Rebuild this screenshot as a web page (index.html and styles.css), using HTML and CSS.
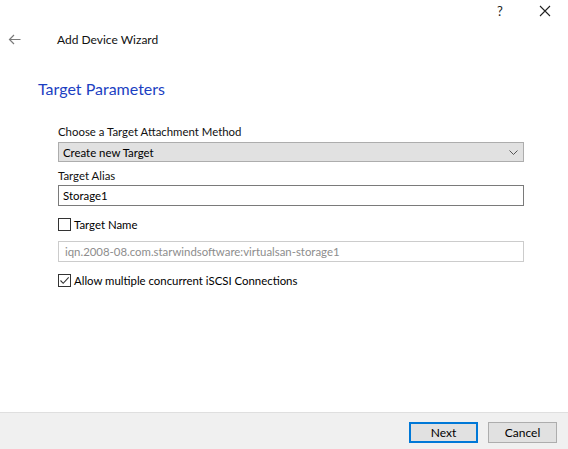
FILE: index.html
```html
<!DOCTYPE html>
<html>
<head>
<meta charset="utf-8">
<link rel="stylesheet" href="styles.css">
</head>
<body>
<div class="window">
  <div class="titlebar">
    <span class="tb-btn help">?</span>
    <span class="tb-btn close">
      <svg width="12" height="12" viewBox="0 0 12 12"><path d="M1 1 L11 11 M11 1 L1 11" stroke="#222" stroke-width="1.1" fill="none"/></svg>
    </span>
  </div>
  <div class="header">
    <span class="back">
      <svg width="13" height="11" viewBox="0 0 13 11"><path d="M12.5 5.5 H1.5 M6 1 L1.5 5.5 L6 10" stroke="#7a7a7a" stroke-width="1.2" fill="none"/></svg>
    </span>
    <span class="wiz-title">Add Device Wizard</span>
  </div>
  <main class="content">
    <h1 class="page-title">Target Parameters</h1>
    <div class="form">
      <label class="field-label">Choose a Target Attachment Method</label>
      <div class="combo">
        <span>Create new Target</span>
        <svg width="9" height="5" viewBox="0 0 9 5"><path d="M0.5 0.5 L4.5 4.5 L8.5 0.5" stroke="#555" stroke-width="1" fill="none"/></svg>
      </div>
      <label class="field-label alias">Target Alias</label>
      <div class="textbox">Storage1</div>
      <div class="check-row name-row">
        <span class="checkbox"></span>
        <span>Target Name</span>
      </div>
      <div class="textbox disabled">iqn.2008-08.com.starwindsoftware:virtualsan-storage1</div>
      <div class="check-row multi-row">
        <span class="checkbox checked">
          <svg width="11" height="11" viewBox="0 0 11 11"><path d="M1.5 5.5 L4.2 8.3 L9.7 2.3" stroke="#333" stroke-width="1.1" fill="none"/></svg>
        </span>
        <span>Allow multiple concurrent iSCSI Connections</span>
      </div>
    </div>
  </main>
  <footer class="footer">
    <button class="btn primary">Next</button>
    <button class="btn">Cancel</button>
  </footer>
</div>
</body>
</html>
```
FILE: styles.css
```css
html, body {
  margin: 0;
  padding: 0;
  background: #ffffff;
}
body {
  font-family: Lato, "Noto Sans", sans-serif;
  font-size: 12px;
  color: #000;
}
.window {
  display: flex;
  flex-direction: column;
  height: 449px;
  width: 568px;
}
.titlebar {
  height: 22px;
  display: flex;
  justify-content: flex-end;
  align-items: center;
}
.tb-btn {
  width: 46px;
  display: flex;
  justify-content: center;
  align-items: center;
  height: 22px;
}
.help {
  font-size: 13px;
  color: #222;
  margin-right: -1px;
}
.header {
  display: flex;
  align-items: center;
  height: 34px;
}
.back {
  width: 13px;
  margin-left: 8px;
  margin-right: 36px;
  display: flex;
}
.wiz-title {
  font-size: 12px;
  color: #111;
}
.content {
  flex: 1;
}
.page-title {
  margin: 22px 0 0 38px;
  font-size: 16px;
  font-weight: normal;
  color: #1c3fc2;
  line-height: 22px;
}
.form {
  margin: 24px 0 0 58px;
  width: 466px;
  font-size: 11.4px;
}
.field-label {
  display: block;
  line-height: 16px;
  height: 16px;
  color: #111;
}
.alias {
  margin-top: 6px;
}
.combo {
  margin-top: 2px;
  height: 18px;
  border: 1px solid #adadad;
  background: #e1e1e1;
  display: flex;
  align-items: center;
  justify-content: space-between;
  padding: 0 5px 0 4px;
}
.textbox {
  margin-top: 1px;
  height: 19px;
  line-height: 19px;
  border: 1px solid #7a7a7a;
  padding: 0 4px;
  background: #fff;
}
.textbox.disabled {
  margin-top: 9px;
  border-color: #cccccc;
  color: #8d8d8d;
  height: 19px;
  line-height: 19px;
  padding: 0 6px;
}
.check-row {
  display: flex;
  align-items: center;
  gap: 3px;
  height: 16px;
}
.name-row {
  margin-top: 10px;
}
.multi-row {
  margin-top: 10px;
}
.checkbox {
  width: 11px;
  height: 11px;
  border: 1px solid #333;
  display: flex;
  align-items: center;
  justify-content: center;
  background: #fff;
}
.footer {
  height: 37px;
  border-top: 1px solid #dfdfdf;
  background: #f0f0f0;
  display: flex;
  justify-content: flex-end;
  align-items: center;
  gap: 10px;
  padding-right: 11px;
  padding-top: 2px;
  box-sizing: border-box;
}
.btn {
  font-family: inherit;
  font-size: 12px;
  width: 69px;
  height: 21px;
  background: #e1e1e1;
  border: 1px solid #adadad;
  color: #000;
  padding: 0;
  margin: 0;
}
.btn.primary {
  border: 2px solid #0078d7;
}
```
